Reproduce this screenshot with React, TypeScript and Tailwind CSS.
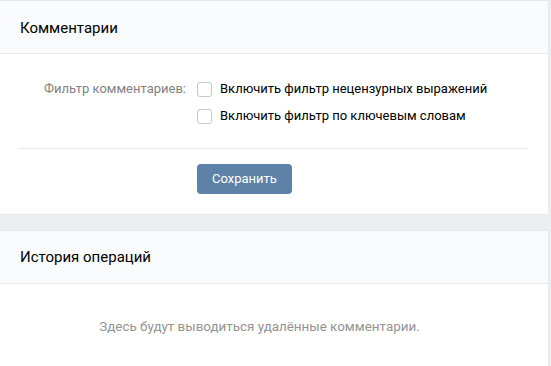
import React, { useState } from 'react';

const font = { fontFamily: 'Roboto, "Open Sans", sans-serif' };

function Checkbox({ checked, onChange, label }: { checked: boolean; onChange: () => void; label: string }) {
  return (
    <label className="flex items-center h-[20px] cursor-pointer">
      <span
        onClick={onChange}
        className={`w-[15px] h-[15px] rounded-[3px] border ${checked ? 'border-[#5e81a8] bg-[#5e81a8]' : 'border-[#c1c9d1] bg-white'}`}
      />
      <span className="ml-[8px] text-[13px] text-black">{label}</span>
    </label>
  );
}

export default function App() {
  const [obscene, setObscene] = useState(false);
  const [keywords, setKeywords] = useState(false);

  return (
    <div className="w-[551px] h-[366px] bg-[#edeef0] overflow-hidden" style={font}>
      <div className="w-[549px] bg-white border-t border-r border-b border-[#e7e8ec]">
        <div className="h-[53px] bg-[#fafbfc] border-b border-[#e7e8ec] flex items-center px-5 pt-[2px]">
          <h2 className="text-[15px] text-black">Комментарии</h2>
        </div>
        <div className="pt-[25px] pb-[20px]">
          <div className="flex">
            <div className="w-[186px] h-[20px] flex items-center justify-end text-[13px] text-[#828282]">
              Фильтр комментариев:
            </div>
            <div className="ml-[11px] flex flex-col gap-[7px]">
              <Checkbox checked={obscene} onChange={() => setObscene(v => !v)} label="Включить фильтр нецензурных выражений" />
              <Checkbox checked={keywords} onChange={() => setKeywords(v => !v)} label="Включить фильтр по ключевым словам" />
            </div>
          </div>
          <div className="mx-5 mt-[22px] border-t border-[#e7e8ec]" />
          <div className="pl-[197px] mt-[15px]">
            <button className="h-[30px] px-[15px] rounded-[4px] bg-[#5e81a8] text-white text-[13px]">
              Сохранить
            </button>
          </div>
        </div>
      </div>

      <div className="mt-[15px] w-[549px] bg-white border-t border-r border-[#e7e8ec]">
        <div className="h-[53px] bg-[#fafbfc] border-b border-[#e7e8ec] flex items-center px-5">
          <h2 className="text-[15px] text-black">История операций</h2>
        </div>
        <div className="h-[86px] flex items-center justify-center pr-[29px] text-[13.4px] text-[#939393]">
          Здесь будут выводиться удалённые комментарии.
        </div>
      </div>
    </div>
  );
}
